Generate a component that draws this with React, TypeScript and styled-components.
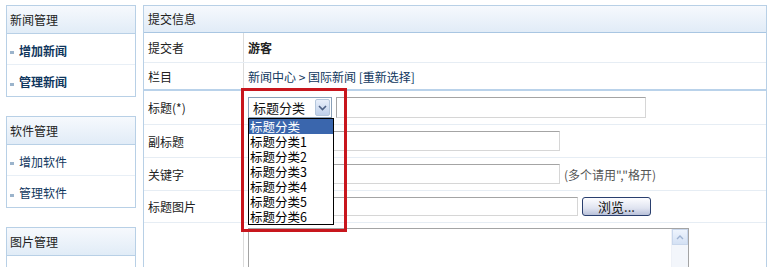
import styled, { createGlobalStyle } from "styled-components";

const GlobalStyle = createGlobalStyle`
  body {
    margin: 0;
    background: #fff;
    font-family: "Noto Sans CJK SC", "DejaVu Sans", sans-serif;
    font-size: 12px;
    color: #222;
  }
`;

const Page = styled.div`
  display: flex;
  align-items: flex-start;
  gap: 7px;
  padding: 5px 0 0 6px;
  height: 262px;
  overflow: hidden;
`;

const Sidebar = styled.div`
  display: flex;
  flex-direction: column;
  gap: 19px;
  width: 130px;
`;

const MenuBox = styled.div`
  border: 1px solid #b8d0e6;
  background: #fff;
`;

const MenuHead = styled.div`
  height: 27px;
  line-height: 27px;
  padding-left: 3px;
  font-size: 12px;
  color: #222;
  background: linear-gradient(#f6f9fd, #e1ecf7);
  border-bottom: 1px solid #b8d0e6;
`;

const MenuItem = styled.a<{ $bold?: boolean }>`
  display: flex;
  align-items: center;
  gap: 5px;
  height: 31px;
  padding: 2px 0 0 3px;
  box-sizing: border-box;
  color: #10375e;
  font-weight: ${(p) => (p.$bold ? 700 : 400)};
  text-decoration: none;
  border-bottom: 1px solid #e8eff6;
  &:last-child {
    border-bottom: none;
  }
  &::before {
    content: "";
    width: 4px;
    height: 3px;
    margin-top: 5px;
    background: #9bb4cc;
  }
`;

const MenuEmpty = styled.div`
  height: 30px;
`;

const Main = styled.div`
  position: relative;
  width: 622px;
  border: 1px solid #b8d0e6;
  border-bottom: none;
`;

const PanelHead = styled.div`
  height: 26px;
  line-height: 26px;
  padding-left: 4px;
  background: linear-gradient(#f6f9fd, #e1ecf7);
  border-bottom: 1px solid #a9c6e2;
`;

const Section = styled.div<{ $last?: boolean }>`
  border-bottom: ${(p) => (p.$last ? "none" : "2px solid #b9d2ea")};
`;

const Row = styled.div<{ $h: number }>`
  display: grid;
  grid-template-columns: 100px 1fr;
  height: ${(p) => p.$h}px;
  border-bottom: 1px solid #e6edf4;
  &:last-child {
    border-bottom: none;
  }
`;

const Label = styled.div`
  display: flex;
  align-items: center;
  padding-left: 4px;
  border-right: 1px solid #dcdcdc;
  color: #222;
`;

const Value = styled.div<{ $top?: boolean }>`
  display: flex;
  align-items: ${(p) => (p.$top ? "flex-start" : "center")};
  gap: 4px;
  padding: ${(p) => (p.$top ? "5px 0 0 4px" : "0 0 0 4px")};
  color: #10375e;
`;

const Bold = styled.span`
  font-weight: 700;
  color: #222;
`;

const TextInput = styled.div<{ $w: number; $h?: number }>`
  width: ${(p) => p.$w}px;
  height: ${(p) => p.$h ?? 20}px;
  box-sizing: border-box;
  border: 1px solid #a4a4a4;
  border-right-color: #d6d6d6;
  border-bottom-color: #d6d6d6;
  background: #fff;
`;

const Hint = styled.span`
  color: #555;
`;

const SelectBox = styled.div`
  display: flex;
  align-items: center;
  justify-content: space-between;
  width: 84px;
  height: 21px;
  box-sizing: border-box;
  border: 1px solid #8aa0b8;
  padding: 1px 1px 1px 4px;
  background: #fff;
  color: #111;
  font-size: 13px;
`;

const SelectArrow = styled.div`
  width: 15px;
  height: 17px;
  box-sizing: border-box;
  border: 1px solid #b5c7dc;
  border-radius: 2px;
  background: linear-gradient(#e8effa, #bfd0ea);
  display: flex;
  align-items: center;
  justify-content: center;
`;

const BrowseButton = styled.button`
  width: 69px;
  height: 19px;
  padding: 0;
  border: 1px solid #2a3f6e;
  border-radius: 3px;
  background: linear-gradient(#fdfdff, #dfe3f0 60%, #b9c1d9);
  font-family: inherit;
  font-size: 13px;
  color: #111;
  line-height: 15px;
`;

const TextArea = styled.div`
  display: flex;
  justify-content: flex-end;
  width: 441px;
  height: 60px;
  box-sizing: border-box;
  border: 1px solid #a4a4a4;
  background: #fff;
`;

const ScrollBar = styled.div`
  width: 16px;
  background: #f3f6fb;
  border-left: 1px solid #eef1f7;
`;

const ScrollUp = styled.div`
  height: 16px;
  box-sizing: border-box;
  border: 1px solid #c9d7ec;
  background: linear-gradient(#eef4fd, #d4e1f4);
  display: flex;
  align-items: center;
  justify-content: center;
`;

const Highlight = styled.div`
  position: absolute;
  left: 97px;
  top: 82px;
  width: 106px;
  height: 144px;
  box-sizing: border-box;
  border: 3px solid #c8161d;
  pointer-events: none;
`;

const DropList = styled.ul`
  position: absolute;
  left: 104px;
  top: 112px;
  width: 86px;
  margin: 0;
  padding: 0;
  list-style: none;
  box-sizing: border-box;
  border: 1px solid #000;
  background: #fff;
`;

const DropItem = styled.li<{ $active?: boolean }>`
  height: 15px;
  line-height: 15px;
  padding-left: 1px;
  font-size: 12.5px;
  color: ${(p) => (p.$active ? "#fff" : "#000")};
  background: ${(p) => (p.$active ? "#3a66ad" : "transparent")};
`;

const options = ["标题分类", "标题分类1", "标题分类2", "标题分类3", "标题分类4", "标题分类5", "标题分类6"];

const menus = [
  { title: "新闻管理", items: ["增加新闻", "管理新闻"], bold: true },
  { title: "软件管理", items: ["增加软件", "管理软件"], bold: false },
  { title: "图片管理", items: [], bold: false },
];

export default function App() {
  return (
    <>
      <GlobalStyle />
      <Page>
        <Sidebar>
          {menus.map((m) => (
            <MenuBox key={m.title}>
              <MenuHead>{m.title}</MenuHead>
              {m.items.map((it) => (
                <MenuItem key={it} href="#" $bold={m.bold}>
                  {it}
                </MenuItem>
              ))}
              {m.items.length === 0 && <MenuEmpty />}
            </MenuBox>
          ))}
        </Sidebar>

        <Main>
          <PanelHead>提交信息</PanelHead>
          <Section>
            <Row $h={29}>
              <Label>提交者</Label>
              <Value>
                <Bold>游客</Bold>
              </Value>
            </Row>
            <Row $h={26}>
              <Label>栏目</Label>
              <Value>新闻中心 &gt; 国际新闻 [重新选择]</Value>
            </Row>
          </Section>
          <Section $last>
            <Row $h={33}>
              <Label>标题(*)</Label>
              <Value>
                <SelectBox>
                  标题分类
                  <SelectArrow>
                    <svg width="9" height="6" viewBox="0 0 9 6">
                      <path d="M1 1 L4.5 4.5 L8 1" fill="none" stroke="#4d6185" strokeWidth="1.6" />
                    </svg>
                  </SelectArrow>
                </SelectBox>
                <TextInput $w={310} $h={21} />
              </Value>
            </Row>
            <Row $h={32}>
              <Label>副标题</Label>
              <Value>
                <TextInput $w={312} />
              </Value>
            </Row>
            <Row $h={32}>
              <Label>关键字</Label>
              <Value>
                <TextInput $w={312} />
                <Hint>(多个请用","格开)</Hint>
              </Value>
            </Row>
            <Row $h={31}>
              <Label>标题图片</Label>
              <Value>
                <TextInput $w={330} $h={19} />
                <BrowseButton>浏览...</BrowseButton>
              </Value>
            </Row>
            <Row $h={60}>
              <Label />
              <Value $top>
                <TextArea>
                  <ScrollBar>
                    <ScrollUp>
                      <svg width="8" height="5" viewBox="0 0 8 5">
                        <path d="M1 4 L4 1 L7 4" fill="none" stroke="#9fb3d2" strokeWidth="1.4" />
                      </svg>
                    </ScrollUp>
                  </ScrollBar>
                </TextArea>
              </Value>
            </Row>
          </Section>
          <Highlight />
          <DropList>
            {options.map((o, i) => (
              <DropItem key={o} $active={i === 0}>
                {o}
              </DropItem>
            ))}
          </DropList>
        </Main>
      </Page>
    </>
  );
}
